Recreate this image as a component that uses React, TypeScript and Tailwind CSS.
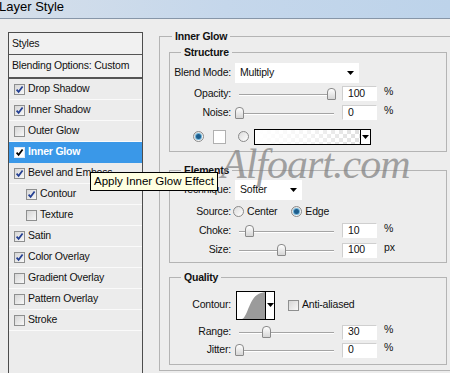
import React from 'react';

type StyleItem = { label: string; checked?: boolean; indent?: boolean; active?: boolean };

const styleItems: StyleItem[] = [
  { label: 'Drop Shadow', checked: true },
  { label: 'Inner Shadow', checked: true },
  { label: 'Outer Glow' },
  { label: 'Inner Glow', checked: true, active: true },
  { label: 'Bevel and Emboss', checked: true },
  { label: 'Contour', checked: true, indent: true },
  { label: 'Texture', indent: true },
  { label: 'Satin', checked: true },
  { label: 'Color Overlay', checked: true },
  { label: 'Gradient Overlay' },
  { label: 'Pattern Overlay' },
  { label: 'Stroke' },
];

const Checkbox = ({ checked, inverted }: { checked?: boolean; inverted?: boolean }) => (
  <span
    className={
      inverted
        ? 'flex h-[11px] w-[11px] shrink-0 items-center justify-center border border-[#dfe9f5] bg-white'
        : 'flex h-[11px] w-[11px] shrink-0 items-center justify-center border border-[#8e8f8f] bg-gradient-to-br from-[#d6d6d6] to-[#f8f8f8]'
    }
  >
    {checked && (
      <svg width="9" height="9" viewBox="0 0 9 9">
        <path d="M1.6 4.6 L3.6 6.8 L7.6 1.4" fill="none" stroke={inverted ? '#000' : '#233f93'} strokeWidth="1.7" />
      </svg>
    )}
  </span>
);

const Radio = ({ on }: { on?: boolean }) => (
  <span className="flex h-[11px] w-[11px] shrink-0 items-center justify-center rounded-full border border-[#8a8a8a] bg-gradient-to-br from-[#dcdcdc] to-white">
    {on && <span className="h-[5px] w-[5px] rounded-full bg-[#1d5d8c] shadow-[0_0_0_1px_#6fb3d8]" />}
  </span>
);

const Arrow = () => (
  <svg width="7" height="4" viewBox="0 0 7 4">
    <path d="M0 0 H7 L3.5 4 Z" fill="#000" />
  </svg>
);

const Dropdown = ({ value, width }: { value: string; width: string }) => (
  <div className={`flex h-[20px] items-center justify-between bg-white pl-[5px] pr-[5px] ${width}`}>
    <span>{value}</span>
    <Arrow />
  </div>
);

const Label = ({ children }: { children: React.ReactNode }) => (
  <div className="w-[61px] shrink-0 text-right">{children}</div>
);

// track runs from 4px to 99px inside the 104px box
const Slider = ({ thumb }: { thumb: string }) => (
  <div className="relative ml-[4px] h-full w-[104px] shrink-0">
    <div className="absolute left-[4px] right-[5px] top-1/2 h-[2px] border-t border-[#a4a4a4] bg-white" />
    <div className={`absolute top-1/2 h-[12px] w-[9px] -translate-y-1/2 rounded-t-[4px] rounded-b-[1px] border border-[#8a8a8a] bg-gradient-to-b from-white to-[#d6d6d6] ${thumb}`} />
  </div>
);

const NumField = ({ value, unit }: { value: string; unit: string }) => (
  <>
    <div className="ml-[3px] flex h-[15px] w-[35px] items-center border border-t-[#cfcfcf] border-l-[#cfcfcf] border-r-white border-b-white bg-white pl-[5px]">
      {value}
    </div>
    <span className="-mt-[4px] ml-[7px]">{unit}</span>
  </>
);

const SliderRow = ({ label, thumb, value, unit, h }: { label: string; thumb: string; value: string; unit: string; h: string }) => (
  <div className={`flex items-center ${h}`}>
    <Label>{label}</Label>
    <Slider thumb={thumb} />
    <NumField value={value} unit={unit} />
  </div>
);

const StylesPanel = () => (
  <div className="ml-[8px] mt-[13px] h-[360px] w-[135px] shrink-0 border border-[#4d4d4d] bg-[#ececec]">
    <div className="flex h-[22px] items-center border-b border-[#555] bg-[#f1f1f1] pl-[3px]">Styles</div>
    <div className="flex h-[24px] items-center border-b-2 border-[#555] bg-[#f1f1f1] pl-[3px]">Blending Options: Custom</div>
    {styleItems.map((item) => (
      <div
        key={item.label}
        className={`flex h-[21px] items-center gap-[3px] whitespace-nowrap border-b ${item.indent ? 'pl-[17px]' : 'pl-[5px]'} ${
          item.active ? 'border-[#3a98e8] bg-[#3a98e8] font-bold text-white' : 'border-[#fafafa]'
        }`}
      >
        <Checkbox checked={item.checked} inverted={item.active} />
        <span>{item.label}</span>
      </div>
    ))}
  </div>
);

const Group = ({ title, className, children }: { title: string; className: string; children: React.ReactNode }) => (
  <fieldset className={`border border-[#b4b4b4] ${className}`}>
    <legend className="ml-[11px] px-[3px] font-bold leading-[13px]">{title}</legend>
    {children}
  </fieldset>
);

export default function App() {
  return (
    <div className="relative h-[373px] w-[450px] overflow-hidden bg-[#ededed] font-['Liberation_Sans',Arial,sans-serif] text-[10.5px] tracking-[-0.2px] text-[#111]">
      <div className="h-[19px] border-b border-[#8796a8] bg-gradient-to-r from-[#d5dfea] via-[#c5d7eb] to-[#bdd3ea] text-[13px] leading-[14px] tracking-normal text-black">
        <span className="-ml-[1px]">Layer Style</span>
      </div>

      <div className="flex items-start">
        <StylesPanel />

        <fieldset className="ml-[16px] mt-[11px] w-[300px] shrink-0 border border-[#b4b4b4]">
          <legend className="ml-[12px] px-[3px] font-bold leading-[13px]">Inner Glow</legend>
          <div className="pb-[5px] pl-[9px]">
            <Group title="Structure" className="mt-[3px] w-[278px]">
              <div className="pb-[6px]">
                <div className="mt-[4px] flex h-[20px] items-center">
                  <Label>Blend Mode:</Label>
                  <div className="ml-[4px]">
                    <Dropdown value="Multiply" width="w-[124px]" />
                  </div>
                </div>
                <div className="mt-[1px]">
                  <SliderRow label="Opacity:" thumb="left-[92px]" value="100" unit="%" h="h-[19px]" />
                </div>
                <SliderRow label="Noise:" thumb="left-[0px]" value="0" unit="%" h="h-[19px]" />
                <div className="mt-[6px] flex h-[17px] items-center pl-[23px]">
                  <Radio on />
                  <div className="ml-[9px] h-[14px] w-[13px] border border-[#b0b0b0] bg-white" />
                  <div className="ml-[12px]">
                    <Radio />
                  </div>
                  <div className="ml-[5px] flex h-[16px] w-[117px] border border-black">
                    <div className="flex-1 bg-[repeating-conic-gradient(#dcdcdc_0_25%,#ffffff_0_50%)] bg-[length:8px_8px]">
                      <div className="h-full w-full bg-gradient-to-r from-white via-white/70 to-white/10" />
                    </div>
                    <div className="flex w-[10px] items-center justify-center border-l border-black bg-white">
                      <Arrow />
                    </div>
                  </div>
                </div>
              </div>
            </Group>

            <Group title="Elements" className="mt-[12px] w-[278px]">
              <div className="pb-[2px]">
                <div className="mt-[3px] flex h-[20px] items-center">
                  <Label>Technique:</Label>
                  <div className="ml-[4px]">
                    <Dropdown value="Softer" width="w-[67px]" />
                  </div>
                </div>
                <div className="mt-[2px] flex h-[19px] items-center">
                  <Label>Source:</Label>
                  <div className="ml-[2px] flex items-center gap-[3px]">
                    <Radio />
                    <span>Center</span>
                  </div>
                  <div className="ml-[14px] flex items-center gap-[3px]">
                    <Radio on />
                    <span>Edge</span>
                  </div>
                </div>
                <SliderRow label="Choke:" thumb="left-[10px]" value="10" unit="%" h="h-[19px]" />
                <SliderRow label="Size:" thumb="left-[42px]" value="100" unit="px" h="h-[20px]" />
              </div>
            </Group>

            <Group title="Quality" className="mt-[8px] w-[278px]">
              <div className="pb-[5px]">
                <div className="mt-[6px] flex h-[30px] items-center">
                  <Label>Contour:</Label>
                  <div className="ml-[5px] flex h-[29px] w-[39px] border border-black bg-white">
                    <svg width="28" height="27" viewBox="0 0 28 27" className="shrink-0">
                      <path d="M5 27 C 11 25, 12 4, 24 1 L 28 0 L 28 27 Z" fill="#9b9b9b" />
                    </svg>
                    <div className="flex flex-1 items-center justify-center border-l border-black">
                      <Arrow />
                    </div>
                  </div>
                  <div className="ml-[13px] flex items-center gap-[3px]">
                    <Checkbox />
                    <span>Anti-aliased</span>
                  </div>
                </div>
                <div className="mt-[3px]">
                  <SliderRow label="Range:" thumb="left-[27px]" value="30" unit="%" h="h-[18px]" />
                </div>
                <SliderRow label="Jitter:" thumb="left-[0px]" value="0" unit="%" h="h-[18px]" />
              </div>
            </Group>
          </div>
        </fieldset>
      </div>

      {/* tooltip over the styles list */}
      <div className="absolute left-[90px] top-[172px] whitespace-nowrap border border-black bg-[#ffffe1] px-[3px] text-[11.5px] leading-[17px] tracking-normal text-black">
        Apply Inner Glow Effect
      </div>

      {/* watermark */}
      <div className="pointer-events-none absolute left-[221px] top-[143px] font-['Liberation_Serif',serif] text-[42px] italic leading-none tracking-[-1px] text-[#858585]/75">
        Alfoart.com
      </div>
    </div>
  );
}
